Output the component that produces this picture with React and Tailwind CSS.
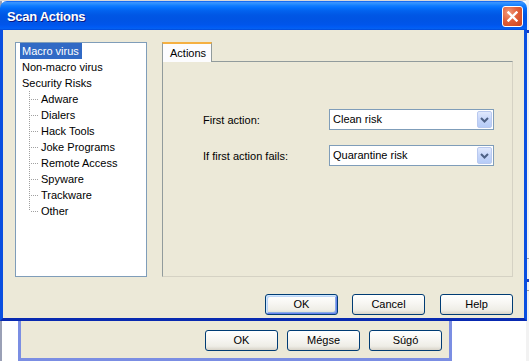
import React from "react";

const children = ["Adware", "Dialers", "Hack Tools", "Joke Programs", "Remote Access", "Spyware", "Trackware", "Other"];

function Chevron() {
  return (
    <svg width="9" height="6" viewBox="0 0 9 6">
      <path d="M1 1 L4.5 4.5 L8 1" fill="none" stroke="#4d6185" strokeWidth="2" />
    </svg>
  );
}

function Combo({ value }) {
  return (
    <div className="flex h-[21px] w-[165px] items-center border border-[#7f9db9] bg-white pl-[3px] pr-px">
      <span className="flex-1 text-[11px] leading-none text-black">{value}</span>
      <div className="flex h-[17px] w-[15px] items-center justify-center rounded-[2px] border border-[#b9c9ef] bg-[linear-gradient(180deg,#e0e9fd_0%,#c6d6fa_50%,#b6ccf7_100%)]">
        <Chevron />
      </div>
    </div>
  );
}

function Btn({ children, def, className = "" }) {
  return (
    <div
      className={
        "flex h-[21px] w-[73px] items-center justify-center rounded-[3px] border border-[#003c74] bg-[linear-gradient(180deg,#ffffff_0%,#f7f6f2_45%,#eeede6_80%,#d8d3c8_100%)] text-[11px] text-black " +
        (def ? "shadow-[inset_1px_1px_0_#cee7ff,inset_-1px_-1px_0_#6982ee,inset_2px_2px_0_#bcd4f6,inset_-2px_-2px_0_#89ade4] " : "") +
        className
      }
    >
      {children}
    </div>
  );
}

function Connector({ last }) {
  return (
    <svg width="9" height="16" viewBox="0 0 9 16" className="shrink-0">
      <line x1="0.5" y1="0" x2="0.5" y2={last ? 8 : 16} stroke="#a0a0a0" strokeDasharray="1 1" />
      <line x1="2" y1="8.5" x2="9" y2="8.5" stroke="#a0a0a0" strokeDasharray="1 1" />
    </svg>
  );
}

function Tree() {
  return (
    <div className="flex h-[235px] w-[132px] flex-col border border-[#7f9db9] bg-white pl-[4px] text-[11px] leading-[16px] text-black">
      <div className="flex h-[16px] items-center">
        <span className="bg-[#316ac5] px-[2px] pr-[3px] text-white">Macro virus</span>
      </div>
      <div className="flex h-[16px] items-center">
        <span className="px-[2px]">Non-macro virus</span>
      </div>
      <div className="flex h-[16px] items-center">
        <span className="px-[2px]">Security Risks</span>
      </div>
      {children.map((c, i) => (
        <div key={c} className="ml-[9px] flex h-[16px] items-center">
          <Connector last={i === children.length - 1} />
          <span className="ml-px px-[2px]">{c}</span>
        </div>
      ))}
    </div>
  );
}

function Tabs() {
  return (
    <div className="flex w-[351px] flex-col">
      <div className="flex h-[19px]">
        <div className="relative z-10 -mb-px flex h-[20px] w-[50px] items-center border-x border-t-[2px] border-x-[#919b9c] border-t-[#f5b041] bg-[#fcfcfe] pl-[7px] text-[11px] text-black">
          Actions
        </div>
      </div>
      <div className="flex h-[216px] flex-col gap-[15px] border border-[#919b9c] border-r-[#d5d2c4] border-b-[#d5d2c4] pl-[40px] pt-[47px]">
        <div className="flex h-[21px] items-center">
          <span className="mt-[2px] w-[126px] text-[11px] text-black">First action:</span>
          <Combo value="Clean risk" />
        </div>
        <div className="flex h-[21px] items-center">
          <span className="mt-[2px] w-[126px] text-[11px] text-black">If first action fails:</span>
          <Combo value="Quarantine risk" />
        </div>
      </div>
    </div>
  );
}

export default function App() {
  return (
    <div className="relative h-[361px] w-[529px] overflow-hidden bg-white font-['Liberation_Sans',Arial,sans-serif]">
      {/* background desktop bits */}
      <div className="absolute left-0 top-0 h-[361px] w-[2px] bg-[#9aa0b6]" />
      <div className="absolute left-0 top-0 h-px w-[529px] bg-[#d8d8d8]" />
      <div className="absolute right-0 top-0 flex h-[361px] w-[3px] flex-col bg-[#f2f2f2]">
        <div className="mt-[30px] h-[3px] bg-[#1a3fc0]" />
        <div className="mt-[225px] h-px bg-[#9a9a9a]" />
        <div className="mt-[20px] h-[3px] bg-[#1a3fc0]" />
        <div className="mt-[8px] h-px bg-[#9a9a9a]" />
      </div>

      {/* window behind */}
      <div className="absolute left-[18px] top-[200px] flex h-[161px] w-[434px] flex-col justify-end border-[3px] border-[#7b8ee3] bg-[#ece9d8] pb-[7px] pr-[7px]">
        <div className="flex justify-end gap-[9px]">
          <Btn className="w-[72px]">OK</Btn>
          <Btn className="w-[72px]">Mégse</Btn>
          <Btn className="w-[73px]">Súgó</Btn>
        </div>
      </div>

      {/* dialog */}
      <div className="absolute left-0 top-px flex h-[320px] w-[527px] flex-col">
        <div className="flex h-[29px] items-center rounded-t-[7px] bg-[linear-gradient(180deg,#0058ee_0%,#3a93ff_5%,#288eff_10%,#127dff_16%,#036ffc_24%,#0262ee_34%,#0057e5_48%,#0054e3_62%,#0055eb_82%,#005bf5_90%,#0460f0_95%,#0048d8_100%)] pl-[7px] pr-[4px]">
          <span className="mt-[3px] flex-1 text-[13px] font-bold tracking-[-0.3px] text-white [text-shadow:1px_1px_0_#0a1883]">
            Scan Actions
          </span>
          <div className="mt-px flex h-[21px] w-[21px] items-center justify-center rounded-[3px] border border-white bg-[radial-gradient(circle_at_30%_30%,#f09a7c_0%,#e2603a_45%,#c9431d_100%)]">
            <svg width="11" height="11" viewBox="0 0 11 11">
              <path d="M1.5 1.5 L9.5 9.5 M9.5 1.5 L1.5 9.5" stroke="white" strokeWidth="2.4" strokeLinecap="square" />
            </svg>
          </div>
        </div>
        <div className="flex flex-1 flex-col border-x-[3px] border-b-[3px] border-x-[#0a4fe0] border-b-[#0829b0] bg-[#ece9d8] pl-[12px] pr-[11px] pt-[12px]">
          <div className="flex gap-[15px]">
            <Tree />
            <Tabs />
          </div>
          <div className="mt-[17px] flex justify-end">
            <Btn def>OK</Btn>
            <Btn className="ml-[14px]">Cancel</Btn>
            <Btn className="ml-[15px]">Help</Btn>
          </div>
        </div>
      </div>
    </div>
  );
}
